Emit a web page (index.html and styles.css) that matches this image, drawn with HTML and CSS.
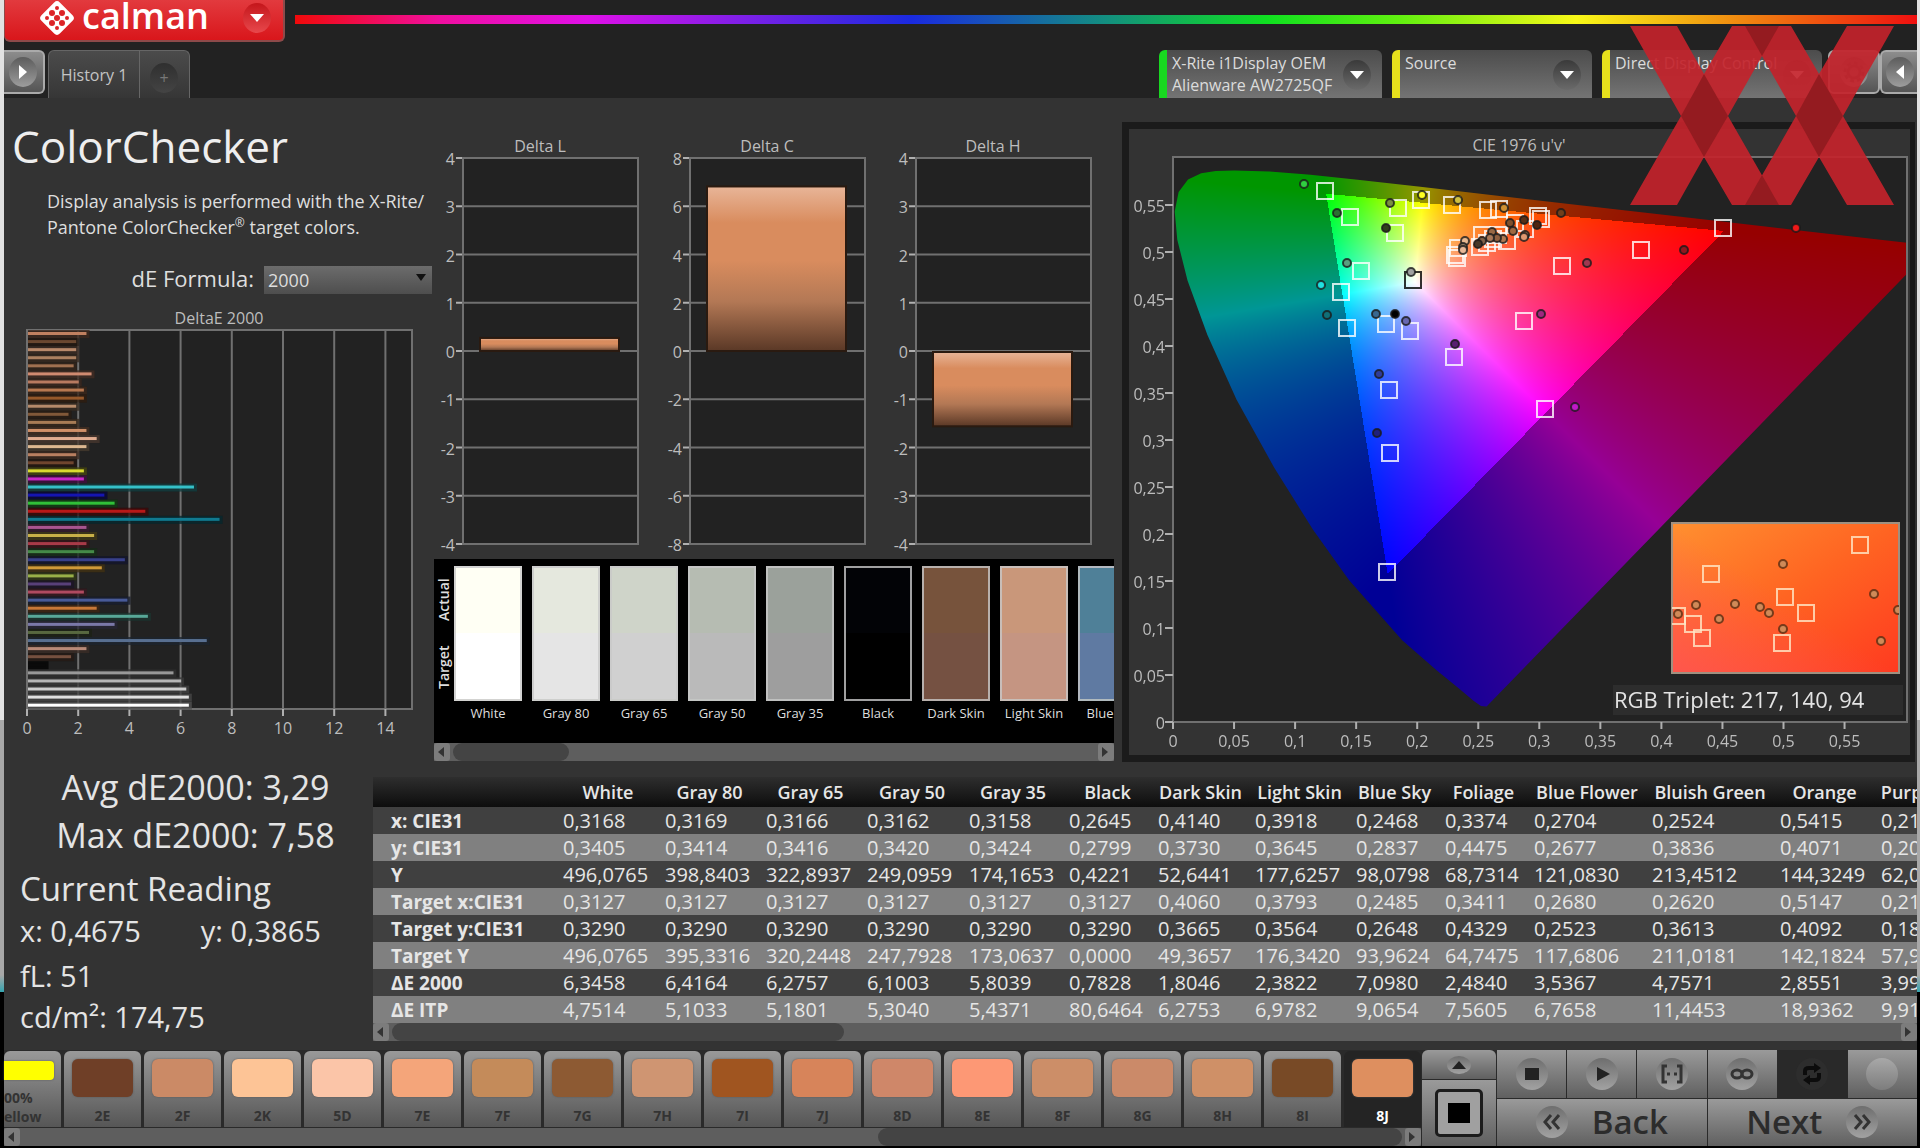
FILE: index.html
```
<!DOCTYPE html>
<html lang="en">
<head>
    <meta charset="UTF-8">
    <meta name="viewport" content="width=device-width, initial-scale=1.0">
    <title>Calman - ColorChecker</title>
    <link rel="stylesheet" href="styles.css">
</head>
<body>
    <div class="window">
        <header>
            <div class="brand-row">
                <button class="brand" aria-label="Calman menu">
                    <svg class="brand-mark" viewBox="0 0 36 36" width="36" height="36">
                        <rect x="5" y="5" width="26" height="26" rx="4" fill="#fff" transform="rotate(45 18 18)"/>
                        <g fill="#dc2428">
                            <circle cx="18" cy="8" r="2"/><circle cx="13" cy="13" r="3"/><circle cx="23" cy="13" r="3"/>
                            <circle cx="8" cy="18" r="2"/><circle cx="18" cy="18" r="3"/><circle cx="28" cy="18" r="2"/>
                            <circle cx="13" cy="23" r="3"/><circle cx="23" cy="23" r="3"/><circle cx="18" cy="28" r="2"/>
                        </g>
                    </svg>
                    <span class="brand-name">calman</span>
                    <span class="knob knob-red"><i class="tri-down"></i></span>
                </button>
                <div class="spectrum"></div>
            </div>
            <div class="tab-row">
                <button class="side-button side-left" aria-label="Expand"><span class="knob knob-light"><i class="tri-right"></i></span></button>
                <div class="tabs">
                    <button class="tab">History 1</button>
                    <button class="tab tab-add" aria-label="Add history"><span class="knob">+</span></button>
                </div>
                <div class="devices">
                    <button class="device meter"><span>X-Rite i1Display OEM<br>Alienware AW2725QF</span><span class="knob"><i class="tri-down"></i></span></button>
                    <button class="device source"><span>Source</span><span class="knob"><i class="tri-down"></i></span></button>
                    <button class="device display"><span>Direct Display Control</span><span class="knob"><i class="tri-down"></i></span></button>
                    <button class="side-button gear" aria-label="Settings">
                        <span class="knob knob-light">
                            <svg viewBox="0 0 24 24" width="24" height="24" fill="none" stroke="#555"><circle cx="12" cy="12" r="6" stroke-width="3"/><circle cx="12" cy="12" r="9" stroke-width="3" stroke-dasharray="4 3"/></svg>
                        </span>
                    </button>
                    <button class="side-button side-right" aria-label="Collapse"><span class="knob knob-light"><i class="tri-left"></i></span></button>
                </div>
            </div>
            <svg class="watermark" viewBox="0 0 264 179" width="264" height="179">
                <g fill="#c3232b" fill-opacity="0.92">
                    <path d="M0 0H47L74 48L102 0H149L98 90L149 179H102L74 131L47 179H0L51 90Z"/>
                    <path d="M115 0H161L189 48L217 0H264L213 90L264 179H217L189 131L161 179H115L166 90Z"/>
                </g>
                <g fill="#941b20">
                    <path d="M74 48L98 90L74 131L51 90Z"/>
                    <path d="M189 48L213 90L189 131L166 90Z"/>
                    <path d="M115 0H149L132 30Z"/>
                    <path d="M115 179H149L132 149Z"/>
                </g>
            </svg>
        </header>

        <main>
            <div class="analysis">
                <section class="summary">
                    <h1>ColorChecker</h1>
                    <p class="intro">Display analysis is performed with the X-Rite/<br>Pantone ColorChecker<sup>®</sup> target colors.</p>
                    <div class="formula">
                        <label for="formula">dE Formula:</label>
                        <div class="select">
                            <select id="formula"><option>2000</option><option>1976</option><option>ITP</option></select>
                        </div>
                    </div>
                    <svg class="chart" id="deltaE" viewBox="0 0 430 440"></svg>
                </section>

                <section class="deltas">
                    <svg class="chart" id="deltaLCH" viewBox="0 0 688 461"></svg>
                    <div class="swatch-panel">
                        <div class="swatch-view">
                            <div class="swatch-axis"><span>Target</span><span>Actual</span></div>
                            <div class="swatches" id="swatches"></div>
                        </div>
                        <div class="scrollbar"><button aria-label="Left"><i class="tri-left"></i></button><div class="track"><div class="thumb thumb-swatches"></div></div><button aria-label="Right"><i class="tri-right"></i></button></div>
                    </div>
                </section>

                <section class="cie">
                    <svg class="chart" id="cie" viewBox="0 0 781 626"></svg>
                </section>
            </div>

            <div class="results">
                <section class="readings">
                    <p class="stat">Avg dE2000: 3,29</p>
                    <p class="stat">Max dE2000: 7,58</p>
                    <h2>Current Reading</h2>
                    <p class="xy"><span>x: 0,4675</span><span>y: 0,3865</span></p>
                    <p class="fl">fL: 51</p>
                    <p class="cd">cd/m²: 174,75</p>
                </section>
                <section class="data">
                    <div class="table-view">
                        <table>
                            <colgroup id="cols"></colgroup>
                            <thead><tr id="head"></tr></thead>
                            <tbody id="rows"></tbody>
                        </table>
                    </div>
                    <div class="scrollbar"><button aria-label="Left"><i class="tri-left"></i></button><div class="track"><div class="thumb thumb-table"></div></div><button aria-label="Right"><i class="tri-right"></i></button></div>
                </section>
            </div>
        </main>

        <footer>
            <div class="patch-bar">
                <div class="patches" id="patches">
                    <button class="patch patch-first"><span class="patch-color"></span>00%<br>ellow</button>
                </div>
                <div class="scrollbar"><button aria-label="Left"><i class="tri-left"></i></button><div class="track"><div class="thumb thumb-patches"></div></div><button aria-label="Right"><i class="tri-right"></i></button></div>
            </div>
            <div class="pattern">
                <button class="pattern-up" aria-label="Up"><span class="disc disc-small"><i class="tri-up"></i></span></button>
                <button class="pattern-window" aria-label="Pattern window"><span></span></button>
            </div>
            <div class="controls">
                <div class="transport">
                    <button aria-label="Stop"><span class="disc"><svg viewBox="0 0 24 24" width="24" height="24"><path fill="#222" d="M5 6h14v12H5z"/></svg></span></button>
                    <button aria-label="Play"><span class="disc"><svg viewBox="0 0 24 24" width="24" height="24"><path fill="#222" d="M7 5l13 7-13 7z"/></svg></span></button>
                    <button aria-label="Range"><span class="disc"><svg viewBox="0 0 24 24" width="24" height="24" fill="none" stroke="#333" stroke-width="3"><path d="M7 4H3v16h4M17 4h4v16h-4M7 12h3M14 12h3"/></svg></span></button>
                    <button aria-label="Continuous"><span class="disc"><svg viewBox="0 0 24 24" width="24" height="24" fill="none" stroke="#333" stroke-width="3"><ellipse cx="7" cy="12" rx="5" ry="4"/><ellipse cx="17" cy="12" rx="5" ry="4"/></svg></span></button>
                    <button class="active" aria-label="Repeat"><span class="disc disc-dark"><svg viewBox="0 0 24 24" width="24" height="24" fill="none" stroke="#0c0c0c" stroke-width="4"><path d="M5 13V9q0-3 4-3h6M19 11v4q0 3-4 3H9"/><path fill="#0c0c0c" stroke="none" d="M14 1l7 5-7 5zM10 13l-7 5 7 5z"/></svg></span></button>
                    <button aria-label="Record"><span class="disc disc-plain"></span></button>
                </div>
                <div class="steps">
                    <button><span class="disc"><svg viewBox="0 0 24 24" width="24" height="24" fill="none" stroke="#333" stroke-width="3"><path d="M11 5l-6 7 6 7M19 5l-6 7 6 7"/></svg></span>Back</button>
                    <button>Next<span class="disc"><svg viewBox="0 0 24 24" width="24" height="24" fill="none" stroke="#333" stroke-width="3"><path d="M5 5l6 7-6 7M13 5l6 7-6 7"/></svg></span></button>
                </div>
            </div>
        </footer>
    </div>
    <script src="script.js"></script>
</body>
</html>
```

FILE: styles.css
```
* { margin: 0; padding: 0; box-sizing: border-box; }
body { font-family: 'Open Sans', 'Noto Sans', sans-serif; font-size: 16px; color: #dedede; padding: 0 3px 2px 4px; background: linear-gradient(#e2e2e2 0 720px, #a8a8a8 720px 975px, #35a5b0 992px, #000 992px); overflow: hidden; }
button { font: inherit; color: inherit; border: none; background: none; cursor: pointer; }
.window { background: #333; }

.tri-down, .tri-up, .tri-left, .tri-right { display: block; width: 0; height: 0; border: 7px solid transparent; }
.tri-down { border-top: 8px solid #fff; border-bottom: 0; }
.tri-up { border-bottom: 8px solid #222; border-top: 0; }
.tri-left { border-right: 8px solid #fff; border-left: 0; }
.tri-right { border-left: 8px solid #fff; border-right: 0; }

/* header */
header { position: relative; background: #222; height: 98px; }
.brand-row { display: flex; height: 42px; }
.brand { display: flex; align-items: center; width: 281px; padding: 0 12px 4px 34px; background: linear-gradient(#e23a3e, #d9161b); border: 1px solid #8d4a4a; border-width: 0 2px 2px 1px; border-radius: 0 0 6px 6px; }
.brand-name { color: #fff; font-size: 36px; font-weight: 600; line-height: 36px; margin: -4px auto 0 7px; }
.knob { display: flex; align-items: center; justify-content: center; flex: none; width: 28px; height: 30px; border-radius: 50%; background: linear-gradient(#3a3a3a, #6a6a6a); }
.knob-red { background: linear-gradient(#c4161b, #e8484c); }
.knob-light { background: linear-gradient(#5c5c5c, #9d9d9d); }
.spectrum { flex: 1; height: 9px; margin: 15px 0 0 10px; background: linear-gradient(90deg, #f00a0a, #f00fa0 9%, #e010e8 18%, #7a20e8 28%, #1a2ae0 38%, #138f80 50%, #10e020 60%, #60f010 68%, #f8f818 79%, #f08a10 89%, #f01010); }
.tab-row { display: flex; align-items: flex-start; height: 56px; padding-top: 8px; }
.side-button { display: flex; align-items: center; height: 44px; background: linear-gradient(#8c8c8c, #555); border: 2px solid #aaa; }
.side-left { width: 41px; border-left: 0; border-radius: 0 6px 6px 0; padding-left: 5px; }
.side-right { width: 37px; border-right: 0; border-radius: 6px 0 0 6px; padding-left: 4px; }
.gear { width: 52px; border-radius: 6px; justify-content: center; margin-left: 6px; }
.tabs { display: flex; margin-left: 3px; height: 48px; border: 1px solid #666; border-bottom: 0; border-radius: 6px 6px 0 0; background: linear-gradient(#4b4b4b, #363636); }
.tab { width: 90px; color: #c4c4c4; }
.tab-add { width: 50px; border-left: 1px solid #666; padding: 6px 10px 0; color: #777; }
.tab-add .knob { background: linear-gradient(#2f2f2f, #444); }
.devices { display: flex; margin-left: auto; }
.device { display: flex; align-items: flex-start; justify-content: space-between; height: 48px; margin-right: 10px; padding: 2px 11px 0 5px; line-height: 22px; text-align: left; color: #dcdcdc; white-space: nowrap; background: linear-gradient(#4c4c4c, #747474); border-left: 8px solid #e6e01c; border-radius: 6px 6px 0 0; }
.device .knob { margin-top: 8px; }
.meter { width: 223px; border-left-color: #18d820; }
.source { width: 200px; }
.display { width: 220px; margin-right: 0; }
.watermark { position: absolute; top: 26px; right: 23px; z-index: 2; }

/* charts */
.analysis { display: grid; grid-template-columns: 430fr 688fr 795fr; min-height: 665px; }
.analysis > section { min-width: 0; }
.chart { display: block; width: 100%; height: auto; }
.chart text { font-size: 16px; fill: #bdbdbd; }
.grid { stroke: #707070; stroke-width: 2; fill: none; }
.tick { stroke: #b0b0b0; stroke-width: 2; }
.summary h1 { font-size: 44px; font-weight: 400; line-height: 60px; padding: 18px 0 0 8px; color: #eee; }
.intro { font-size: 18px; line-height: 26px; margin-top: 12px; padding-left: 43px; white-space: nowrap; }
.intro sup { font-size: 12px; line-height: 0; }
.formula { display: flex; align-items: center; justify-content: flex-end; gap: 10px; margin: 24px 2px 13px 0; height: 28px; font-size: 22px; }
.select { position: relative; width: 168px; }
.select::after { content: ''; position: absolute; right: 6px; top: 11px; border: 5px solid transparent; border-top: 7px solid #111; border-bottom: 0; pointer-events: none; }
.select select { width: 100%; height: 28px; appearance: none; border: 0; padding-left: 4px; font: inherit; font-size: 18px; color: #dedede; background: linear-gradient(#6c6c6c, #4e4e4e); }

.swatch-panel { margin-right: 8px; }
.swatch-view { display: flex; height: 184px; padding-top: 7px; background: #000; overflow: hidden; }
.swatch-axis { flex: none; display: flex; justify-content: space-around; writing-mode: vertical-rl; transform: rotate(180deg); width: 20px; height: 135px; font-size: 14px; font-weight: 600; line-height: 20px; }
.swatches { display: flex; gap: 10px; }
.swatch { flex: none; width: 68px; font-size: 13px; font-weight: 500; line-height: 24px; text-align: center; white-space: nowrap; }
.swatch-color { height: 135px; border: 2px solid rgba(200, 200, 200, 0.8); }

.scrollbar { display: flex; height: 18px; background: #5e5e5e; }
.scrollbar button { width: 16px; padding: 0 4px; background: #7c7c7c; border-radius: 3px; }
.scrollbar i { border-width: 5px; border-right-color: #333; border-left-color: #333; }
.scrollbar .tri-left { border-left: 0; border-right-width: 6px; }
.scrollbar .tri-right { border-right: 0; border-left-width: 6px; }
.track { flex: 1; padding: 0 3px; }
.thumb { height: 18px; border-radius: 9px; background: #444; }
.thumb-swatches { width: 18%; }
.thumb-table { width: 30%; }
.thumb-patches { width: 38%; margin-left: auto; }

.cie { margin: 24px 2px 0 0; border: solid #1b1b1b; border-width: 7px 5px 7px 7px; align-self: start; }
.chart .triplet { font-size: 22px; font-weight: 500; fill: #e4e4e4; }
canvas { display: block; width: 100%; height: 100%; }

/* readings and table */
.results { display: grid; grid-template-columns: 369px minmax(0, 1fr); min-height: 287px; }
.readings { color: #e4e4e4; font-size: 29px; line-height: 32px; padding-left: 16px; }
.stat { font-size: 34px; line-height: 48px; text-align: center; padding-right: 2px; }
.readings h2 { font-size: 33px; font-weight: 400; line-height: 44px; margin-top: 8px; }
.xy { display: flex; gap: 60px; margin-top: 4px; }
.fl { margin-top: 13px; }
.cd { margin-top: 9px; }
.data { margin-top: 14px; }
.table-view { overflow: hidden; }
table { table-layout: fixed; border-collapse: collapse; width: 1602px; color: #e6e6e6; font-size: 20px; }
th, td { height: 27px; line-height: 26px; padding: 0 0 0 6px; text-align: left; white-space: nowrap; }
thead tr { background: linear-gradient(#2e2e2e, #0d0d0d); }
thead th { height: 30px; padding: 0; font-size: 18px; font-weight: 600; text-align: center; }
tbody th { padding-left: 18px; font-size: 19px; }
tbody tr { background: #404040; }
tbody tr:nth-child(even) { background: #808080; }

/* bottom bar */
footer { display: grid; grid-template-columns: minmax(0, 1fr) 74px 420px; height: 96px; gap: 1px; background: #2a2a2a; }
.patch-bar { min-width: 0; }
.patches { display: flex; justify-content: flex-end; gap: 3px; height: 78px; padding-top: 1px; }
.patch { display: flex; flex-direction: column; align-items: center; flex: none; width: 77px; height: 76px; padding: 8px 7px 0; font-size: 14px; font-weight: 700; line-height: 38px; color: #333; background: linear-gradient(#999, #565656); border-radius: 6px 6px 0 0; }
.patch-color { display: block; flex: none; width: 61px; height: 38px; border-radius: 6px; box-shadow: 0 0 2px #555; }
.patch-first { flex: 1; display: block; width: auto; padding: 8px 7px 0 0; line-height: 19px; text-align: left; }
.patch-first .patch-color { width: auto; height: 19px; margin-bottom: 8px; background: #ff0; border-radius: 0 4px 4px 0; }
.patch.selected { color: #fff; background: #242424; }
.pattern { display: flex; flex-direction: column; gap: 1px; }
.pattern button, .controls button { background: linear-gradient(#9a9a9a, #606060); }
.disc { display: flex; align-items: center; justify-content: center; width: 32px; height: 32px; border-radius: 50%; background: linear-gradient(#6e6e6e, #a2a2a2); }
.disc-small { width: 24px; height: 18px; }
.disc-dark { background: #2d2d2d; }
.disc-plain { background: linear-gradient(#a8a8a8, #7d7d7d); }
.pattern-up { display: flex; align-items: center; justify-content: center; height: 29px; border-radius: 6px 6px 0 0; }
.pattern-window { flex: 1; display: flex; align-items: center; justify-content: center; }
.pattern-window span { width: 48px; height: 48px; border: 3px solid #1c1c1c; border-radius: 5px; background: linear-gradient(#000, #000) center / 22px 20px no-repeat, #a0a0a0; }
.controls { display: flex; flex-direction: column; gap: 1px; }
.transport, .steps { display: flex; gap: 1px; flex: 1; }
.controls button { flex: 1; display: flex; align-items: center; justify-content: center; }
.controls .active { background: #292929; }
.steps button { gap: 24px; font-size: 33px; line-height: 40px; font-weight: 600; color: #2c2c2c; }
```

FILE: script.js
```
const byId = id => document.getElementById(id);
const line = (x1, y1, x2, y2, cls) => `<line class="${cls}" x1="${x1}" y1="${y1}" x2="${x2}" y2="${y2}"/>`;
const text = (x, y, str, anchor = 'middle', cls = '') => `<text class="${cls}" x="${x}" y="${y}" text-anchor="${anchor}">${str}</text>`;

// DeltaE 2000, one bar per patch, top to bottom
const deltaE = [
    [2.4, '#c08060'], [2.0, '#6a4830'], [2.0, '#b8896a'], [2.0, '#ab8060'], [1.9, '#a07050'], [2.6, '#d08a70'],
    [2.1, '#b87a60'], [2.3, '#b87850'], [2.3, '#95582a'], [2.0, '#b58a6a'], [1.7, '#805838'], [2.0, '#a87c55'],
    [2.4, '#d09068'], [2.8, '#e0ac90'], [2.4, '#ddb890'], [2.0, '#b87f60'], [1.9, '#70452e'], [2.3, '#dada30'],
    [2.3, '#c828c8'], [6.6, '#35c0c8'], [3.1, '#1515b0'], [3.5, '#30c038'], [4.7, '#b81818'], [7.6, '#107a90'],
    [2.4, '#a85590'], [2.7, '#c8b048'], [2.4, '#a83a48'], [2.7, '#458a48'], [3.9, '#38408a'], [3.0, '#d09a38'],
    [1.9, '#98b048'], [1.8, '#584078'], [2.3, '#b04a60'], [4.0, '#485a98'], [2.8, '#c87838'], [4.8, '#58a898'],
    [3.5, '#7a78a8'], [2.5, '#586840'], [7.1, '#586f90'], [2.4, '#b88a78'], [1.8, '#75503f'], [0.8, '#0a0a0a'],
    [5.8, '#999'], [6.1, '#b5b5b5'], [6.3, '#ccc'], [6.4, '#e0e0e0'], [6.4, '#fff']
];

function drawDeltaE() {
    let out = text(215, 19, 'DeltaE 2000') + '<rect x="23" y="25" width="385" height="379" fill="#222"/><rect class="grid" x="23" y="25" width="385" height="379"/>';
    for (let v = 0; v < 15; v += 2) {
        const x = 23 + v * 25.6;
        out += line(x, 25, x, 404, 'grid') + line(x, 404, x, 411, 'tick') + text(x, 429, v);
    }
    deltaE.forEach(([v, color], i) => {
        const y = 27 + i * 8.08;
        out += `<rect x="24" y="${y - 2}" width="${v * 25.6}" height="8" fill="#000" opacity="0.7"/>`;
        out += `<rect x="24" y="${y - 2}" width="${v * 25.6}" height="8" fill="${color}" opacity="0.25"/>`;
        out += `<rect x="24" y="${y}" width="${v * 25.6 - 3}" height="3" fill="${color}"/>`;
    });
    byId('deltaE').innerHTML = out;
}

function drawDeltaLCH() {
    let out = `<defs><linearGradient id="skin" x2="0" y2="1">
        <stop offset="0" stop-color="#e8b598"/><stop offset="0.22" stop-color="#d98c5e"/><stop offset="0.45" stop-color="#d98c5e"/>
        <stop offset="0.7" stop-color="#b37855"/><stop offset="1" stop-color="#5a3826"/></linearGradient></defs>`;
    const charts = [['Delta L', 29, 4, 0.27], ['Delta C', 256, 8, 6.82], ['Delta H', 482, 4, -1.54]];
    charts.forEach(([title, left, max, value]) => {
        out += text(left + 77, 54, title) + `<rect x="${left}" y="60" width="175" height="386" fill="#222"/>`;
        for (let i = 0; i <= 8; i++) {
            const y = 60 + i * 48.25;
            out += line(left, y, left + 175, y, 'grid') + line(left - 7, y, left, y, 'tick');
            out += text(left - 8, y + 7, max - i * max / 4, 'end');
        }
        out += `<rect class="grid" x="${left}" y="60" width="175" height="386"/>`;
        const h = Math.abs(value) / max * 193;
        out += `<rect x="${left + 17}" y="${value > 0 ? 253 - h : 254}" width="139" height="${h}" fill="url(#skin)" stroke="#2a1a10" stroke-width="2"/>`;
    });
    byId('deltaLCH').innerHTML = out;
}

// CIE 1976 plot: u' 0..0.6, v' 0..0.6
const px = u => 44 + u * 1221;
const py = v => 593 - v * 940;
const locus = [
    [.2568, .0166], [.2522, .0169], [.2461, .0226], [.2347, .0350], [.2161, .0549], [.1877, .0871], [.1441, .1510],
    [.1147, .2044], [.0828, .2708], [.0521, .3427], [.0282, .4117], [.0119, .4698], [.0035, .5131], [.0014, .5432],
    [.0046, .5638], [.0123, .5770], [.0231, .5837], [.0350, .5862], [.0501, .5868], [.0792, .5856], [.1127, .5821], [.1531, .5766],
    [.2026, .5694], [.2623, .5604], [.3315, .5501], [.4035, .5393], [.4692, .5296], [.5203, .5219], [.5830, .5125], [.6234, .5065]
];
const targets = [
    [196, 62], [221, 88], [269, 79], [266, 104], [232, 142], [212, 163], [218, 199], [257, 195], [281, 202], [325, 228],
    [260, 261], [261, 324], [258, 443], [292, 71], [323, 76], [359, 81], [395, 192], [329, 119], [326, 126], [328, 129],
    [353, 106], [351, 118], [358, 114], [364, 110], [369, 106], [378, 112], [386, 94], [409, 87], [412, 90], [370, 80],
    [396, 100], [433, 137], [512, 121], [594, 99], [416, 280]
];
const readings = [
    [175, 55, '#30d040'], [208, 84, '#2a7030'], [261, 74, '#7a9040'], [257, 99, '#30401c'], [293, 66, '#ffff20'],
    [329, 71, '#d0c040'], [375, 79, '#d09030'], [218, 134, '#58a080'], [192, 156, '#20e0e0'], [198, 186, '#107078'],
    [247, 185, '#386890'], [266, 185, '#000'], [277, 192, '#6868b0'], [282, 143, '#a0a0a0'], [326, 215, '#582070'],
    [250, 245, '#303c98'], [248, 304, '#20207c'], [432, 84, '#70401c'], [458, 134, '#a03850'], [555, 121, '#901820'],
    [667, 99, '#f01818'], [412, 185, '#a02880'], [446, 278, '#c018c8'], [381, 94, '#80502c'], [395, 91, '#583018'],
    [408, 96, '#502410'], [384, 102, '#a06840'], [396, 106, '#c08058'], [395, 108, '#e09870'], [363, 103, '#986844'],
    [374, 110, '#b07850'], [368, 109, '#906040'], [361, 109, '#a87858'], [353, 112, '#806048'], [349, 115, '#483828'],
    [336, 112, '#e8b890'], [334, 118, '#907860'], [334, 121, '#e8b898']
];
const insetTargets = [[731, 416], [582, 445], [656, 468], [677, 484], [653, 514], [573, 509], [564, 495], [548, 487]];
const insetReadings = [[654, 435], [745, 465], [769, 481], [752, 512], [654, 500], [640, 484], [631, 478], [606, 475], [590, 490], [567, 476], [549, 485]];

const square = ([x, y], color = '#fff') => `<rect x="${x - 8}" y="${y - 8}" width="16" height="16" fill="none" stroke="${color}" stroke-opacity="0.8" stroke-width="2"/>`;
const dot = ([x, y, fill], stroke = '#1a1a1a') => `<circle cx="${x}" cy="${y}" r="4" fill="${fill}" stroke="${stroke}" stroke-opacity="0.8" stroke-width="2"/>`;

function drawCie() {
    let out = `<defs>
        <clipPath id="insetClip"><rect x="543" y="394" width="227" height="150"/></clipPath>
        <linearGradient id="insetFill" x2="1" y2="1"><stop offset="0" stop-color="#ff9030"/><stop offset="0.5" stop-color="#ff6422"/><stop offset="1" stop-color="#ff3a20"/></linearGradient>
        <linearGradient id="insetTint" x1="0.5" y1="0.5" x2="0" y2="1"><stop offset="0" stop-color="#ff5060" stop-opacity="0"/><stop offset="1" stop-color="#ff5060" stop-opacity="0.7"/></linearGradient></defs>`;
    out += text(390, 22, "CIE 1976 u'v'");
    out += '<rect x="44" y="28" width="734" height="565" fill="#222"/>';
    out += '<foreignObject x="44" y="28" width="734" height="565"><canvas id="gamut" width="734" height="565"></canvas></foreignObject>';
    out += '<rect class="grid" x="44" y="28" width="734" height="565"/>';
    for (let i = 0; i < 12; i++) {
        const label = String(i * 5 / 100).replace('.', ',');
        out += line(px(i * .05), 593, px(i * .05), 600, 'tick') + text(px(i * .05), 618, label);
        out += line(36, py(i * .05), 44, py(i * .05), 'tick') + text(36, py(i * .05) + 7, label, 'end');
    }
    out += targets.map(t => square(t)).join('') + square([284, 151], '#000') + readings.map(r => dot(r)).join('');
    out += '<rect x="543" y="394" width="227" height="150" fill="url(#insetFill)"/><rect x="543" y="394" width="227" height="150" fill="url(#insetTint)" stroke="#a09080" stroke-width="2"/>';
    out += '<g clip-path="url(#insetClip)">' + insetTargets.map(t => square(t, '#ffe8c8')).join('') + insetReadings.map(([x, y]) => dot([x, y, '#d08a58'], '#5a2c10')).join('') + '</g>';
    out += '<rect x="484" y="556" width="290" height="30" fill="#2d2d2d"/>' + text(485, 579, 'RGB Triplet: 217, 140, 94', 'start', 'triplet');
    byId('cie').innerHTML = out;
    fillGamut(byId('gamut'));
}

function fillGamut(canvas) {
    const ctx = canvas.getContext('2d');
    const w = canvas.width, h = canvas.height;
    const img = ctx.createImageData(w, h);
    for (let j = 0; j < h; j++) {
        for (let i = 0; i < w; i++) {
            const u = i / 1221, v = (565 - j) / 940;
            const d = 6 * u - 16 * v + 12;
            const x = 9 * u / d, y = Math.max(4 * v / d, 0.001);
            const X = x / y, Z = (1 - x - y) / y;
            const rgb = [3.2406 * X - 1.5372 - 0.4986 * Z, -0.9689 * X + 1.8758 + 0.0415 * Z, 0.0557 * X - 0.2040 + 1.0570 * Z];
            const max = Math.max(...rgb);
            const level = Math.min(...rgb) < 0 ? 150 : 255;
            const k = (j * w + i) * 4;
            rgb.forEach((c, n) => { img.data[k + n] = level * Math.pow(Math.max(c, 0) / max, 0.9); });
            img.data[k + 3] = 255;
        }
    }
    ctx.putImageData(img, 0, 0);
    ctx.globalCompositeOperation = 'destination-in';
    ctx.beginPath();
    locus.forEach(([u, v]) => ctx.lineTo(px(u) - 44, py(v) - 28));
    ctx.fill();
}

const swatches = [
    ['White', '#fffff4', '#fff'], ['Gray 80', '#e5e8de', '#e5e5e5'], ['Gray 65', '#cfd4c9', '#d0d0d0'], ['Gray 50', '#b6bcb2', '#bababa'],
    ['Gray 35', '#9ba19b', '#9e9e9e'], ['Black', '#020306', '#000'], ['Dark Skin', '#77533c', '#755142'], ['Light Skin', '#c9977a', '#c59582'], ['Blue Sky', '#4f8098', '#5f7aa2']
];
byId('swatches').innerHTML = swatches.map(([name, actual, target]) =>
    `<div class="swatch"><div class="swatch-color" style="background:linear-gradient(${actual} 50%, ${target} 50%)"></div>${name}</div>`).join('');

const widths = [184, 102, 101, 101, 102, 100, 89, 97, 101, 89, 89, 118, 128, 101, 100];
const heads = ['', 'White', 'Gray 80', 'Gray 65', 'Gray 50', 'Gray 35', 'Black', 'Dark Skin', 'Light Skin', 'Blue Sky', 'Foliage', 'Blue Flower', 'Bluish Green', 'Orange', 'Purplish B'];
const rows = [
    'x: CIE31|0,3168|0,3169|0,3166|0,3162|0,3158|0,2645|0,4140|0,3918|0,2468|0,3374|0,2704|0,2524|0,5415|0,21',
    'y: CIE31|0,3405|0,3414|0,3416|0,3420|0,3424|0,2799|0,3730|0,3645|0,2837|0,4475|0,2677|0,3836|0,4071|0,20',
    'Y|496,0765|398,8403|322,8937|249,0959|174,1653|0,4221|52,6441|177,6257|98,0798|68,7314|121,0830|213,4512|144,3249|62,0',
    'Target x:CIE31|0,3127|0,3127|0,3127|0,3127|0,3127|0,3127|0,4060|0,3793|0,2485|0,3411|0,2680|0,2620|0,5147|0,21',
    'Target y:CIE31|0,3290|0,3290|0,3290|0,3290|0,3290|0,3290|0,3665|0,3564|0,2648|0,4329|0,2523|0,3613|0,4092|0,18',
    'Target Y|496,0765|395,3316|320,2448|247,7928|173,0637|0,0000|49,3657|176,3420|93,9624|64,7475|117,6806|211,0181|142,1824|57,9',
    'ΔE 2000|6,3458|6,4164|6,2757|6,1003|5,8039|0,7828|1,8046|2,3822|7,0980|2,4840|3,5367|4,7571|2,8551|3,99',
    'ΔE ITP|4,7514|5,1033|5,1801|5,3040|5,4371|80,6464|6,2753|6,9782|9,0654|7,5605|6,7658|11,4453|18,9362|9,91'
];
byId('cols').innerHTML = widths.map(w => `<col style="width:${w}px">`).join('');
byId('head').innerHTML = heads.map(h => `<th scope="col">${h}</th>`).join('');
byId('rows').innerHTML = rows.map(row => {
    const [label, ...cells] = row.split('|');
    return `<tr><th scope="row">${label}</th>${cells.map(c => `<td>${c}</td>`).join('')}</tr>`;
}).join('');

const patches = [
    ['2E', '#6f3f27'], ['2F', '#cb8a66'], ['2K', '#fdc496'], ['5D', '#fbc5a8'], ['7E', '#f4a57a'], ['7F', '#c48b5a'], ['7G', '#8d5a33'], ['7H', '#cf9572'], ['7I', '#a05520'],
    ['7J', '#d7845a'], ['8D', '#cf8769'], ['8E', '#fd9875'], ['8F', '#cc8e68'], ['8G', '#cb8a69'], ['8H', '#cf9067'], ['8I', '#784a26'], ['8J', '#de8f5f']
];
byId('patches').innerHTML += patches.map(([name, color]) =>
    `<button class="patch${name === '8J' ? ' selected' : ''}"><span class="patch-color" style="background:${color}"></span>${name}</button>`).join('');

drawDeltaE();
drawDeltaLCH();
drawCie();
```
